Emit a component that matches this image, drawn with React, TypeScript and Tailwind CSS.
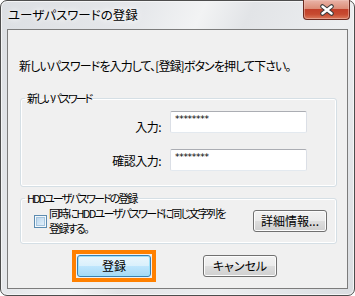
import React from "react";

const jp = "font-['Noto_Sans_CJK_JP','Noto_Sans_CJK_SC',sans-serif] [font-feature-settings:'palt']";

function WinButton({ children, focused = false }: { children: React.ReactNode; focused?: boolean }) {
  return (
    <button
      className={`flex h-[22px] w-[74px] items-center justify-center rounded-[3px] border text-[12px] leading-4 text-black ${
        focused
          ? "border-[#3c7fb1] bg-[linear-gradient(#eaf6fd_0%,#d9f0fc_50%,#bee6fd_51%,#a7d9f5_100%)] shadow-[inset_0_0_0_1px_#9ee1f9]"
          : "border-[#707070] bg-[linear-gradient(#f2f2f2_0%,#ebebeb_50%,#dddddd_51%,#cfcfcf_100%)] shadow-[inset_0_0_0_1px_#fcfcfc]"
      }`}
    >
      {children}
    </button>
  );
}

function PasswordBox() {
  return (
    <div className="h-[22px] w-[137px] rounded-[2px] border border-[#abadb3] border-x-[#dbdfe6] border-b-[#e3e9ef] bg-white pl-[4px] pt-[2px] font-['DejaVu_Sans',sans-serif] text-[9px] leading-[10px] tracking-[-0.3px] text-black">
      ********
    </div>
  );
}

export default function App() {
  return (
    <div
      className={`flex h-[296px] w-[355px] flex-col rounded-[7px] border border-[#4d4d4d] bg-[linear-gradient(115deg,#dcdfe3_0%,#e6e8eb_30%,#f2f3f4_42%,#e2e4e7_52%,#eceef0_72%,#dadde1_100%)] shadow-[inset_0_0_0_1px_#f4f5f6] ${jp}`}
    >
      {/* title bar */}
      <div className="flex h-[28px] shrink-0 items-start">
        <span className="pl-[7px] pt-[6px] text-[12.5px] leading-4 text-black [text-shadow:0_0_5px_#fff,0_0_9px_#fff]">
          ユーザパスワードの登録
        </span>
        <div className="-mt-px ml-auto mr-[4px] flex h-[20px] w-[47px] items-center justify-center rounded-b-[4px] border border-t-0 border-[#6b2a20] bg-[linear-gradient(#e9b4a8_0%,#dc8d78_45%,#c2402a_50%,#c74a30_75%,#dc7a5c_100%)] shadow-[inset_0_0_0_1px_#f0c6bb80]">
          <svg width="16" height="12" viewBox="0 0 16 12">
            <path d="M3.5 2.5 L12.5 9.5 M12.5 2.5 L3.5 9.5" stroke="#3a3a3a" strokeWidth="4.5" strokeLinecap="round" />
            <path d="M3.5 2.5 L12.5 9.5 M12.5 2.5 L3.5 9.5" stroke="#ffffff" strokeWidth="2.5" strokeLinecap="round" />
          </svg>
        </div>
      </div>

      {/* client area */}
      <div className="mx-[6px] flex h-[260px] flex-col border border-[#7c7c7c] bg-[#f0f0f0] pl-[12px] pr-[10px] text-[12px] leading-4 text-black">
        <p className="-ml-px mt-[28px] tracking-[-0.9px]">新しいパスワードを入力して、[登録]ボタンを押して下さい。</p>

        <fieldset className="mt-[16px] rounded-[3px] border border-[#d5dfe5] pb-[15px] shadow-[inset_0_0_0_1px_#ffffff]">
          <legend className="ml-[4px] px-[2px] text-[11px] tracking-[-2px]">新しいパスワード</legend>
          <div className="mt-[5px] flex items-start">
            <span className="w-[140px] pt-[8px] text-right tracking-[-0.5px]">入力:</span>
            <div className="ml-[9px]">
              <PasswordBox />
            </div>
          </div>
          <div className="mt-[14px] flex items-start">
            <span className="w-[140px] pt-[4px] text-right tracking-[-0.5px]">確認入力:</span>
            <div className="ml-[9px]">
              <PasswordBox />
            </div>
          </div>
        </fieldset>

        <fieldset className="mt-[3px] rounded-[3px] border border-[#d5dfe5] pb-[7px] shadow-[inset_0_0_0_1px_#ffffff]">
          <legend className="ml-[4px] px-[2px] text-[11px] tracking-[-2px]">HDDユーザパスワードの登録</legend>
          <div className="flex h-[30px] items-center pl-[13px] pr-[9px]">
            <div className="flex h-[13px] w-[13px] shrink-0 items-center justify-center border border-[#5b8bb0] bg-[#f4f8fb]">
              <div className="h-[9px] w-[9px] bg-[linear-gradient(135deg,#b7d3ea_0%,#d3e6f5_60%,#e8f2fa_100%)] shadow-[inset_0_0_0_1px_#a4c4de]" />
            </div>
            <span className="ml-[2px] whitespace-nowrap text-[11px] leading-[15px] tracking-[-1.7px]">
              同時にHDDユーザパスワードに同じ文字列を
              <br />
              登録する。
            </span>
            <div className="ml-auto">
              <WinButton>詳細情報...</WinButton>
            </div>
          </div>
        </fieldset>

        <div className="mt-[6px] flex items-center">
          <div className="ml-[52px] border-4 border-[#ff8000] p-px">
            <WinButton focused>登録</WinButton>
          </div>
          <div className="ml-[47px]">
            <WinButton>キャンセル</WinButton>
          </div>
        </div>
      </div>
    </div>
  );
}
